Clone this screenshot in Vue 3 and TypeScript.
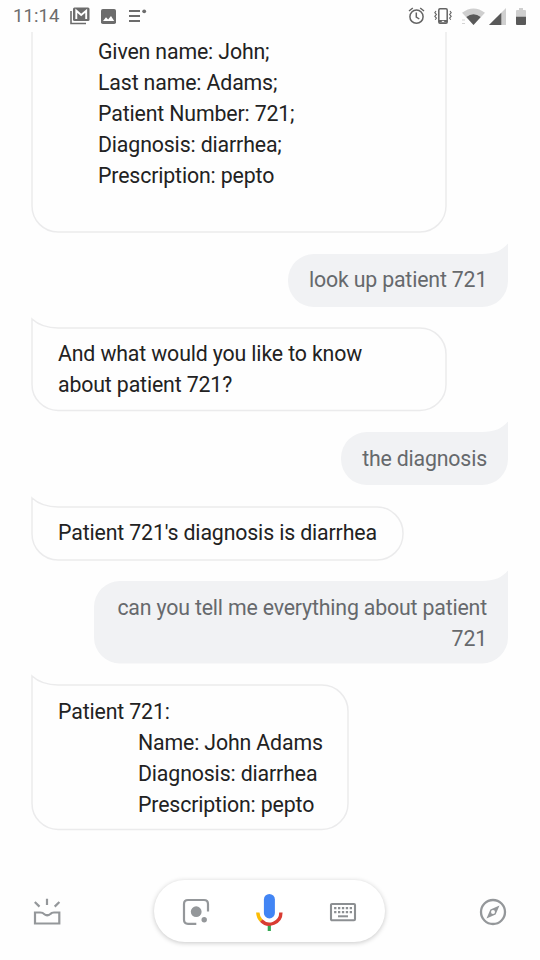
<script setup lang="ts">
interface Line {
  text: string
  indent?: number
}
interface Message {
  from: 'bot' | 'user'
  width: number
  height: number
  lines: Line[]
  clipped?: boolean
}

const messages: Message[] = [
  {
    from: 'bot',
    width: 414,
    height: 206,
    clipped: true,
    lines: [
      { text: 'Given name: John;', indent: 40 },
      { text: 'Last name: Adams;', indent: 40 },
      { text: 'Patient Number: 721;', indent: 40 },
      { text: 'Diagnosis: diarrhea;', indent: 40 },
      { text: 'Prescription: pepto', indent: 40 },
    ],
  },
  { from: 'user', width: 220, height: 53, lines: [{ text: 'look up patient 721' }] },
  {
    from: 'bot',
    width: 414,
    height: 82.4,
    lines: [{ text: 'And what would you like to know' }, { text: 'about patient 721?' }],
  },
  { from: 'user', width: 167, height: 53, lines: [{ text: 'the diagnosis' }] },
  { from: 'bot', width: 371, height: 53, lines: [{ text: "Patient 721's diagnosis is diarrhea" }] },
  {
    from: 'user',
    width: 414,
    height: 82.4,
    lines: [{ text: 'can you tell me everything about patient' }, { text: '721' }],
  },
  {
    from: 'bot',
    width: 316,
    height: 144.4,
    lines: [
      { text: 'Patient 721:' },
      { text: 'Name: John Adams', indent: 80 },
      { text: 'Diagnosis: diarrhea', indent: 80 },
      { text: 'Prescription: pepto', indent: 80 },
    ],
  },
]

// Outline of a rounded bubble whose top corner flares upward on the speaker's side.
// A clipped bubble continues above the scroll area, so its sides run straight up.
function outline(m: Message): string {
  const { width: w, height: h } = m
  const r = 26
  if (m.clipped) {
    return `M0 -40H${w}V${h - r}A${r} ${r} 0 0 1 ${w - r} ${h}H${r}A${r} ${r} 0 0 1 0 ${h - r}Z`
  }
  if (m.from === 'bot') {
    return `M0 -9C6 -3.5 14 0 26 0H${w - r}A${r} ${r} 0 0 1 ${w} ${r}V${h - r}A${r} ${r} 0 0 1 ${w - r} ${h}H${r}A${r} ${r} 0 0 1 0 ${h - r}Z`
  }
  return `M${w} -10.5C${w - 6} -3.5 ${w - 14} 0 ${w - 26} 0H${r}A${r} ${r} 0 0 0 0 ${r}V${h - r}A${r} ${r} 0 0 0 ${r} ${h}H${w - r}A${r} ${r} 0 0 0 ${w} ${h - r}Z`
}
</script>

<template>
  <div class="screen">
    <header class="status">
      <span class="clock">11:14</span>
      <svg class="mail" width="20" height="18" viewBox="0 0 20 18">
        <path d="M1 4V16.5H16" fill="none" stroke="#6c6c6c" stroke-width="1.6" />
        <rect x="3" y="0.5" width="16.5" height="13.5" rx="1.5" fill="#6c6c6c" />
        <path d="M6.3 12V3.7L11.2 8L16.2 3.7V12" fill="none" stroke="#fff" stroke-width="1.9" />
      </svg>
      <svg class="photo" width="15" height="15" viewBox="0 0 15 15">
        <rect width="15" height="15" rx="1.8" fill="#6c6c6c" />
        <path d="M2 12L5 8.2L7.1 10.6L10 7L13.2 12Z" fill="#fff" />
      </svg>
      <svg class="list" width="18" height="14" viewBox="0 0 18 14">
        <path d="M0 2H11M0 7H11M0 12H11" stroke="#6c6c6c" stroke-width="2" />
        <circle cx="15.2" cy="2.3" r="1.9" fill="#6c6c6c" />
      </svg>
      <span class="spacer"></span>
      <svg class="alarm" width="17" height="18" viewBox="0 0 17 18">
        <g fill="none" stroke="#646464" stroke-width="1.5">
          <circle cx="8.5" cy="9.7" r="6.6" />
          <path d="M8.3 5.5V10L11.3 12M1 4L4.8 1M16 4L12.2 1" />
        </g>
      </svg>
      <svg class="vibrate" width="18" height="18" viewBox="0 0 18 18">
        <rect x="4.8" y="1.7" width="8.4" height="14.6" rx="1.2" fill="none" stroke="#646464" stroke-width="1.5" />
        <path d="M5 14.3H13" stroke="#646464" stroke-width="2.6" />
        <path d="M7.8 14.4H10.2" stroke="#fff" stroke-width="1" />
        <path d="M2 4L.8 5.7L2.4 7.5L.8 9.3L2.4 11.1L1.2 12.8M16 4L17.2 5.7L15.6 7.5L17.2 9.3L15.6 11.1L16.8 12.8" fill="none" stroke="#646464" stroke-width="1.1" />
      </svg>
      <svg class="wifi" width="23" height="17" viewBox="0 0 23 17">
        <path d="M0 4.8Q11.5 -3.8 23 4.8L11.5 17Z" fill="#cfcfcf" />
        <path d="M4.3 9Q11.5 3.7 18.7 9L11.5 17Z" fill="#595959" />
        <path d="M0 12H3M0 15.5H3" stroke="#d4d4d4" stroke-width="1" />
      </svg>
      <svg class="cell" width="17" height="17" viewBox="0 0 17 17">
        <path d="M0 17L17 0V17Z" fill="#cfcfcf" />
        <path d="M0 17L12.3 4.7V17Z" fill="#595959" />
      </svg>
      <svg class="battery" width="10" height="17" viewBox="0 0 10 17">
        <path d="M0 3Q0 2 1 2H3V0H7V2H9Q10 2 10 3V9H0Z" fill="#cfcfcf" />
        <path d="M0 8.7H10V16Q10 17 9 17H1Q0 17 0 16Z" fill="#595959" />
      </svg>
    </header>

    <main class="chat">
      <div
        v-for="(m, i) in messages"
        :key="i"
        class="bubble"
        :class="[m.from, { clipped: m.clipped }]"
        :style="{ width: m.width + 'px', height: m.height + 'px' }"
      >
        <svg class="shape" :width="m.width" :height="m.height">
          <path :d="outline(m)" />
        </svg>
        <div class="text">
          <p v-for="(line, j) in m.lines" :key="j" :style="{ paddingLeft: (line.indent ?? 0) + 'px' }">{{ line.text }}</p>
        </div>
      </div>
    </main>

    <footer class="dock">
      <svg class="side" width="28" height="28" viewBox="0 0 28 28" fill="none" stroke="#94979a" stroke-width="2.2">
        <path d="M2 14.5H7.2Q10 14.5 11 16Q14.2 18.5 17.4 16Q18.5 14.5 21 14.5H26.3V25.5H2ZM14 .8V7M1.8 4L6.5 8.6M26.4 4L21.7 8.6" />
      </svg>
      <div class="pill">
        <svg width="28" height="28" viewBox="0 0 28 28">
          <path d="M14.3 25.8H6Q2 25.8 2 21.8V6Q2 2 6 2H22Q26 2 26 6V13.5" fill="none" stroke="#94979a" stroke-width="2.2" />
          <circle cx="14.2" cy="13.7" r="5.4" fill="#94979a" />
          <circle cx="22.2" cy="21.8" r="2.7" fill="#94979a" />
        </svg>
        <svg width="28" height="38" viewBox="0.7 0 28 38">
          <rect x="8.6" y="1" width="11" height="24.4" rx="5.5" fill="#4285f4" />
          <path d="M14 30V38" stroke="#34a853" stroke-width="3.2" />
          <path d="M25.6 19.5A11.5 11.5 0 0 1 5.8 27.5" fill="none" stroke="#d93c32" stroke-width="3.4" />
          <path d="M2.5 19.5Q2.7 24.3 5.9 27.6" fill="none" stroke="#fbbc05" stroke-width="3.4" />
        </svg>
        <svg width="28" height="20" viewBox="0 0 28 20">
          <rect x="2" y="2" width="24" height="16.3" rx="1" fill="none" stroke="#8c8f92" stroke-width="2.1" />
          <path d="M5.1 6.2H23M5.1 10.2H23" stroke="#8c8f92" stroke-width="2.3" stroke-dasharray="2.3 1.6" />
          <path d="M9 14.3H19" stroke="#8c8f92" stroke-width="2" />
        </svg>
      </div>
      <svg class="side" width="28" height="28" viewBox="0 0 28 28">
        <circle cx="14" cy="14" r="12" fill="none" stroke="#94979a" stroke-width="2.3" />
        <path fill-rule="evenodd" d="M20.5 7.5L16.6 16.6L7.5 20.5L11.4 11.4ZM14 12A2 2 0 1 0 14 16A2 2 0 1 0 14 12Z" fill="#94979a" />
      </svg>
    </footer>
  </div>
</template>

<style>
body {
  margin: 0;
  background: #fefefe;
}
</style>

<style scoped>
.screen {
  width: 540px;
  height: 960px;
  display: flex;
  flex-direction: column;
  background: #fefefe;
  font-family: Roboto, sans-serif;
  overflow: hidden;
}
.status {
  height: 32px;
  box-sizing: border-box;
  padding: 0 14px 0 13px;
  display: flex;
  align-items: center;
  flex: none;
}
.clock {
  font-size: 18.5px;
  letter-spacing: 0.1px;
  color: #6c6c6c;
}
.mail { margin-left: 10px; }
.photo { margin-left: 11px; }
.list { margin-left: 13px; }
.spacer { flex: 1; }
.vibrate { margin-left: 9px; }
.wifi { margin-left: 10px; }
.cell { margin-left: 4px; }
.battery { margin-left: 10px; }
.chat {
  flex: none;
  height: 828px;
  box-sizing: border-box;
  padding: 0 32px;
  display: flex;
  flex-direction: column;
  align-items: flex-start;
  gap: 21.6px;
  overflow: hidden;
}
.bubble {
  position: relative;
  flex: none;
  box-sizing: border-box;
  padding: 10.2px 26px;
}
.bubble.clipped {
  margin-top: -6px;
  padding-top: 0;
}
.bubble.clipped .text { margin-top: 10px; }
.bubble.user {
  align-self: flex-end;
  text-align: right;
  padding: 10.6px 21px;
}
.shape {
  position: absolute;
  left: 0;
  top: 0;
  overflow: visible;
}
.bot .shape path {
  fill: #fefefe;
  stroke: #ebebec;
  stroke-width: 1.5;
}
.user .shape path { fill: #f1f2f4; }
.text {
  position: relative;
  font-size: 21.3px;
  letter-spacing: -0.14px;
  line-height: 31px;
  color: #222;
  white-space: nowrap;
}
.user .text {
  color: #66696c;
  letter-spacing: -0.17px;
}
.text p { margin: 0; }
.dock {
  flex: 1;
  display: flex;
  align-items: center;
  justify-content: space-between;
  padding: 0 33.5px 0 33px;
  margin-top: 2px;
}
.dock > .side { margin-top: 1px; }
.pill {
  width: 231px;
  height: 62px;
  box-sizing: border-box;
  border-radius: 31px;
  padding: 2px 28px 0;
  display: flex;
  align-items: center;
  justify-content: space-between;
  background: #fff;
  box-shadow: 0 1px 5px rgba(0, 0, 0, 0.22);
}
</style>
